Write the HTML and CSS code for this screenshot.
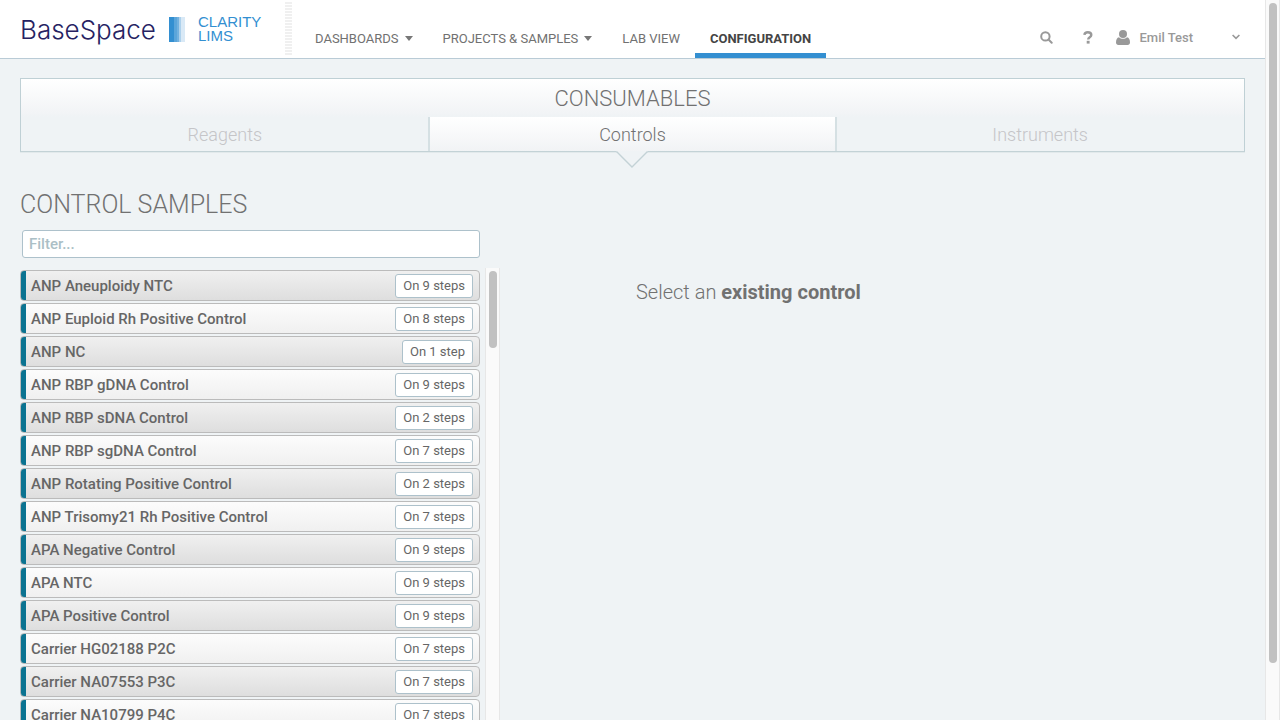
FILE: index.html
```
<!DOCTYPE html>
<html lang="en">
<head>
<meta charset="utf-8">
<title>Control Samples</title>
<link rel="stylesheet" href="styles.css">
</head>
<body>
<div class="page">
  <header class="topbar">
    <a class="brand" href="#">
      <span class="brand-base">BaseSpace</span>
      <svg class="brand-mark" width="16" height="25" viewBox="0 0 16 25" aria-hidden="true"><path fill="#338fd1" d="M0 0h5v25H0z"/><path fill="#5ba5da" d="M5 0h3v25H5z"/><path fill="#72b1df" d="M8 0h2v25H8z"/><path fill="#add1ec" d="M10 0h2v25h-2z"/><path fill="#d9e9f6" d="M12 0h4v25h-4z"/></svg>
      <span class="brand-product"><span>CLARITY</span><span>LIMS</span></span>
    </a>
    <span class="grip"></span>
    <nav class="nav">
      <a href="#">DASHBOARDS<span class="caret"></span></a>
      <a href="#">PROJECTS &amp; SAMPLES<span class="caret"></span></a>
      <a href="#">LAB VIEW</a>
      <a class="active" href="#">CONFIGURATION</a>
    </nav>
    <div class="tools">
      <button class="tool" aria-label="Search"><svg width="13" height="13" viewBox="0 0 13 13" fill="none" stroke="#999" stroke-width="2"><circle cx="5.4" cy="5.4" r="4.2"/><path d="M8.5 8.5l3.2 3.2" stroke-linecap="round"/></svg></button>
      <button class="tool" aria-label="Help"><svg width="10" height="13" viewBox="0 0 10 13"><path d="M1.4 3.8C1.6 2 3 1.2 4.8 1.2c2 0 3.5 1 3.5 2.8 0 2.3-3.1 2.2-3.1 4.4" fill="none" stroke="#999" stroke-width="2.4"/><path d="M3.7 9.8h2.9v2.8H3.7z" fill="#999"/></svg></button>
      <button class="tool user"><svg width="14" height="15" viewBox="0 0 14 15" fill="#999"><circle cx="7" cy="4" r="4"/><path d="M3 7.2c2.2 2 5.800 2 8 0 2 .5 3 2.300 3 5.300 0 1.600-1 2.500-2.400 2.500H2.400C1 15 0 14.100 0 12.500c0-3 1-4.800 3-5.300z"/></svg><span>Emil Test</span><svg class="chevron" width="8" height="6" viewBox="0 0 8 6" fill="none" stroke="#999" stroke-width="1.600"><path d="M.6 1L4 4.400 7.400 1"/></svg></button>
    </div>
  </header>
  <main class="content">
    <section class="consumables">
      <h1>CONSUMABLES</h1>
      <nav class="tabs">
        <a href="#">Reagents</a>
        <a class="selected" href="#">Controls<svg class="pointer" width="32" height="17" viewBox="0 0 32 17"><path d="M0 0h32L16 16z" fill="#eff3f5"/><path d="M.5.5L16 16 31.500.5" fill="none" stroke="#c3d2d6" stroke-width="1.400"/></svg></a>
        <a href="#">Instruments</a>
      </nav>
    </section>
    <div class="columns">
      <section class="samples">
        <h2>CONTROL SAMPLES</h2>
        <input class="filter" type="text" placeholder="Filter..." aria-label="Filter">
        <div class="list-area">
          <ul class="list">
            <li><button class="row"><span>ANP Aneuploidy NTC</span><span class="badge">On 9 steps</span></button></li>
            <li><button class="row"><span>ANP Euploid Rh Positive Control</span><span class="badge">On 8 steps</span></button></li>
            <li><button class="row"><span>ANP NC</span><span class="badge">On 1 step</span></button></li>
            <li><button class="row"><span>ANP RBP gDNA Control</span><span class="badge">On 9 steps</span></button></li>
            <li><button class="row"><span>ANP RBP sDNA Control</span><span class="badge">On 2 steps</span></button></li>
            <li><button class="row"><span>ANP RBP sgDNA Control</span><span class="badge">On 7 steps</span></button></li>
            <li><button class="row"><span>ANP Rotating Positive Control</span><span class="badge">On 2 steps</span></button></li>
            <li><button class="row"><span>ANP Trisomy21 Rh Positive Control</span><span class="badge">On 7 steps</span></button></li>
            <li><button class="row"><span>APA Negative Control</span><span class="badge">On 9 steps</span></button></li>
            <li><button class="row"><span>APA NTC</span><span class="badge">On 9 steps</span></button></li>
            <li><button class="row"><span>APA Positive Control</span><span class="badge">On 9 steps</span></button></li>
            <li><button class="row"><span>Carrier HG02188 P2C</span><span class="badge">On 7 steps</span></button></li>
            <li><button class="row"><span>Carrier NA07553 P3C</span><span class="badge">On 7 steps</span></button></li>
            <li><button class="row"><span>Carrier NA10799 P4C</span><span class="badge">On 7 steps</span></button></li>
          </ul>
          <div class="scroll list-scroll"><div class="thumb"></div></div>
        </div>
      </section>
      <p class="hint">Select an <strong>existing control</strong></p>
    </div>
  </main>
</div>
<div class="scroll page-scroll"><div class="thumb"></div></div>
</body>
</html>
```
FILE: styles.css
```
* { box-sizing: border-box; }
body {
  margin: 0;
  height: 100vh;
  display: flex;
  overflow: hidden;
  background: #eff3f5;
  color: #717171;
  font-family: Roboto, sans-serif;
}
a { color: inherit; text-decoration: none; }
button { font: inherit; color: inherit; cursor: pointer; }
.page { flex: 1; min-width: 0; display: flex; flex-direction: column; }

.topbar {
  flex: none;
  display: flex;
  height: 59px;
  background: #fff;
  border-bottom: 1px solid #b9cbd6;
}
.brand { display: flex; align-items: center; padding-left: 20px; width: 285px; }
.brand-base { width: 149px; font-family: Inter, sans-serif; font-size: 26px; font-weight: 300; color: #262262; }
.brand-mark { margin-right: 13px; }
.brand-product {
  display: grid;
  font-family: "Liberation Sans", sans-serif;
  font-size: 15px;
  line-height: 14px;
  color: #338fd1;
}
.grip { width: 7px; margin: 2px 8px 3px 0; background: repeating-linear-gradient(#f0f0f0 0 2px, #fff 2px 3px); }
.nav { display: flex; font-size: 13px; }
.nav a { display: flex; align-items: center; padding: 23px 15px 0; border-bottom: 5px solid transparent; }
.nav .active { border-color: #338fd1; color: #444; font-weight: 700; }
.caret { margin-left: 6px; border: 4px solid transparent; border-top: 5px solid #777; border-bottom: 0; }
.tools { margin-left: auto; display: flex; align-items: center; gap: 30px; padding: 16px 25px 0 0; }
.tool { display: flex; align-items: center; border: 0; padding: 0; background: none; color: #999; font-size: 13px; font-weight: 500; }
.user { gap: 9px; margin-left: -7px; }
.chevron { margin-left: 30px; }

.content { flex: 1; min-height: 0; display: flex; flex-direction: column; padding: 19px 20px 0; }
.consumables {
  flex: none;
  border: 1px solid #bfd0d5;
  border-bottom-color: #c3d2d6;
  box-shadow: 0 1px 0 #e2e9eb;
  background: linear-gradient(#fff, #f2f4f6 34px, #eff3f5 38px);
}
h1, h2 { margin: 0; font-weight: 300; }
h1 { padding-top: 2px; font-size: 22px; line-height: 36px; text-align: center; }
.tabs { display: grid; grid-template-columns: repeat(3, 1fr); }
.tabs a { height: 34px; line-height: 36px; text-align: center; font-size: 18px; font-weight: 300; color: #c5c5c8; }
.tabs .selected {
  position: relative;
  margin: 0 -1px;
  color: #717171;
  background: linear-gradient(#fff, #f1f3f5);
  border: solid #d5e0e3;
  border-width: 0 2px;
}
.pointer { position: absolute; left: calc(50% - 16px); top: 100%; }

.columns { flex: 1; min-height: 0; display: flex; }
.samples { width: 480px; display: flex; flex-direction: column; }
h2 { padding: 36px 0 8px; font-size: 25px; line-height: 34px; }
.filter {
  width: 458px;
  height: 28px;
  margin: 0 2px;
  padding: 0 6px;
  border: 1px solid #adc1cb;
  border-radius: 3px;
  background: #fff;
  font: 500 15px Roboto, sans-serif;
}
.filter::placeholder { color: #abbfc6; }
.list-area { flex: 1; min-height: 0; display: flex; margin-top: 10px; }
.list { flex: none; width: 460px; margin: 0 5px 0 0; padding: 2px 0 0; list-style: none; overflow: hidden; }
.list li { margin-bottom: 2px; }
.row {
  display: flex;
  align-items: center;
  justify-content: space-between;
  width: 100%;
  height: 31px;
  padding: 0 6px 0 10px;
  border: 1px solid #bbb;
  border-radius: 4px;
  background: linear-gradient(90deg, #0b7391 5px, transparent 5px), linear-gradient(#fcfcfc, #f0f0f0);
  color: #666;
  font-size: 15px;
  font-weight: 500;
}
.list li:nth-child(odd) .row { background: linear-gradient(90deg, #0b7391 5px, transparent 5px), linear-gradient(#f0f0f0, #dedede); }
.badge {
  padding: 0 7px;
  line-height: 22px;
  border: 1px solid #adc1cb;
  border-radius: 3px;
  background: #fff;
  font-size: 13px;
  font-weight: 400;
}
.scroll { flex: none; width: 15px; background: #fafafa; border: solid #e7e7e7; border-width: 0 1px; padding: 3px 0 0 3px; }
.thumb { width: 8px; background: #c1c1c1; border-radius: 4px; }
.list-scroll .thumb { height: 77px; }
.page-scroll .thumb { height: 92%; }
.hint { margin: 127px 0 0 136px; font-size: 20px; line-height: 26px; font-weight: 300; }
.hint strong { font-weight: 700; }
```
